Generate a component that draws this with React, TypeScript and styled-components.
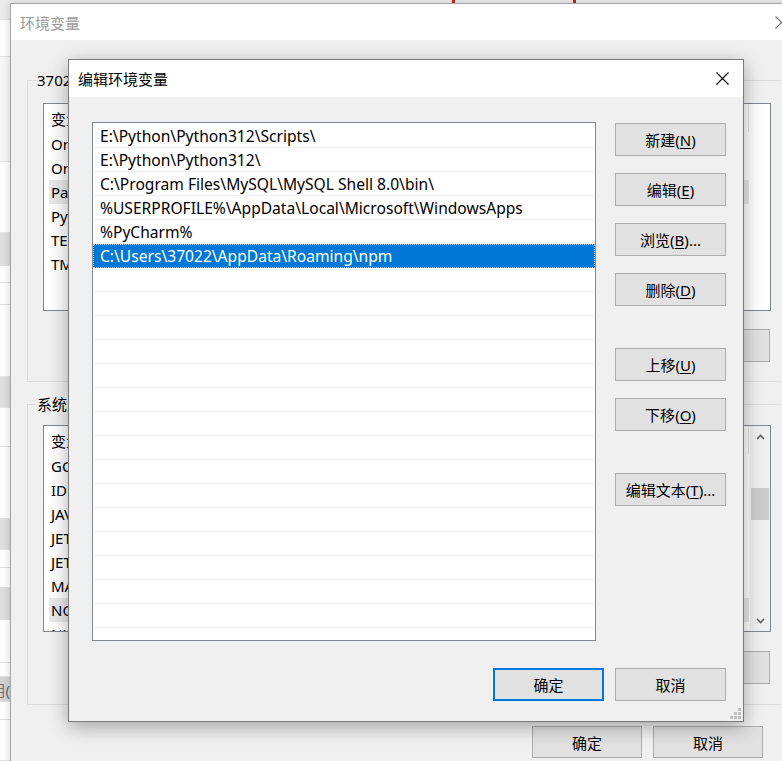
import styled, { createGlobalStyle } from "styled-components";

const GlobalStyle = createGlobalStyle`
  html, body {
    margin: 0;
    padding: 0;
  }
  body {
    font-family: "Noto Sans", "Noto Sans CJK SC", sans-serif;
    font-size: 15px;
    color: #000;
  }
`;

const userVars = ["OneDrive", "OneDriveConsumer", "Path", "PyCharm", "TEMP", "TMP"];
const systemVars = [
  "GOPATH",
  "IDEA_HOME",
  "JAVA_HOME",
  "JETBRAINSCLIENT_VM_OPTIONS",
  "JETBRAINS_GATEWAY_VM_OPTIONS",
  "MAVEN_HOME",
  "NODE_PATH",
  "NUMBER_OF_PROCESSORS",
  "OS",
];

const paths = [
  "E:\\Python\\Python312\\Scripts\\",
  "E:\\Python\\Python312\\",
  "C:\\Program Files\\MySQL\\MySQL Shell 8.0\\bin\\",
  "%USERPROFILE%\\AppData\\Local\\Microsoft\\WindowsApps",
  "%PyCharm%",
  "C:\\Users\\37022\\AppData\\Roaming\\npm",
];

const leftSegments = [
  { h: 20, bg: "#ececec" },
  { h: 37, bg: "#ffffff" },
  { h: 105, bg: "#f7f7f7" },
  { h: 71, bg: "#ffffff" },
  { h: 33, bg: "#dedede" },
  { h: 17, bg: "#ffffff" },
  { h: 22, bg: "#ffffff" },
  { h: 72, bg: "#ffffff" },
  { h: 31, bg: "#dedede" },
  { h: 39, bg: "#ffffff" },
  { h: 72, bg: "#ffffff" },
  { h: 31, bg: "#dedede" },
  { h: 18, bg: "#ffffff" },
  { h: 20, bg: "#ffffff" },
  { h: 32, bg: "#dedede" },
  { h: 43, bg: "#ffffff" },
  { h: 14, bg: "#ffffff" },
  { h: 25, bg: "#d4d4d4", text: "应用(" },
  { h: 18, bg: "#ffffff" },
  { h: 41, bg: "#ffffff" },
];

const Screen = styled.div`
  position: relative;
  width: 782px;
  height: 761px;
  overflow: hidden;
  background: #f3f3f3;
`;

const TopWindow = styled.div`
  position: absolute;
  left: 0;
  top: 0;
  width: 782px;
  height: 3px;
  display: flex;
  background: #eeeeee;
  padding-left: 452px;
  box-sizing: border-box;
`;

const RedMark = styled.div<{ $offset: number }>`
  width: 3px;
  margin-left: ${(p) => p.$offset}px;
  background: #c42b1c;
`;

const LeftWindow = styled.div`
  position: absolute;
  left: 0;
  top: 0;
  width: 10px;
  height: 761px;
  display: flex;
  flex-direction: column;
  overflow: hidden;
`;

const Segment = styled.div<{ $h: number; $bg: string }>`
  height: ${(p) => p.$h}px;
  flex-shrink: 0;
  box-sizing: border-box;
  background: ${(p) => p.$bg};
  border-bottom: 1px solid #e2e2e2;
  display: flex;
  align-items: center;
  justify-content: flex-end;
  overflow: hidden;
  white-space: nowrap;
  color: #6d6d6d;
`;

const BackWindow = styled.div`
  position: absolute;
  left: 10px;
  top: 3px;
  width: 794px;
  height: 790px;
  box-sizing: border-box;
  border: 1px solid #a6a6a6;
  background: #f0f0f0;
  display: flex;
  flex-direction: column;
  box-shadow: 0 0 8px rgba(0, 0, 0, 0.18);
`;

const TitleBar = styled.div<{ $inactive?: boolean }>`
  height: ${(p) => (p.$inactive ? 36 : 37)}px;
  flex-shrink: 0;
  background: #fff;
  display: flex;
  align-items: center;
  justify-content: space-between;
  padding-left: 9px;
  color: ${(p) => (p.$inactive ? "#9a9a9a" : "#000")};
`;

const CloseButton = styled.div<{ $w: number }>`
  width: ${(p) => p.$w}px;
  align-self: stretch;
  display: flex;
  align-items: center;
  justify-content: center;
`;

const BackBody = styled.div`
  padding: 30px 16px 0;
  display: flex;
  flex-direction: column;
`;

const Group = styled.fieldset<{ $gap?: number }>`
  margin: ${(p) => p.$gap ?? 0}px 0 0;
  padding: 0;
  min-width: 0;
  border: 1px solid #dcdcdc;
`;

const Legend = styled.legend`
  margin-left: 8px;
  padding: 0 1px;
  line-height: 20px;
`;

const GroupInner = styled.div<{ $top: number; $bottom: number }>`
  padding: ${(p) => p.$top}px 15px ${(p) => p.$bottom}px;
`;

const VarList = styled.div<{ $h: number }>`
  height: ${(p) => p.$h}px;
  box-sizing: border-box;
  border: 1px solid #828790;
  background: #fff;
  display: flex;
  overflow: hidden;
`;

const VarColumn = styled.div`
  flex: 1;
  min-width: 0;
  overflow: hidden;
`;

const HeaderRow = styled.div`
  width: 705px;
  height: 28px;
  box-sizing: border-box;
  border-right: 1px solid #e5e5e5;
  padding-left: 7px;
  display: flex;
  align-items: center;
`;

const VarRow = styled.div<{ $selected?: boolean }>`
  width: 700px;
  height: 24px;
  margin-left: 5px;
  padding-left: 2px;
  box-sizing: border-box;
  display: flex;
  align-items: center;
  white-space: nowrap;
  background: ${(p) => (p.$selected ? "#e9e9e9" : "transparent")};
`;

const ScrollBar = styled.div`
  width: 20px;
  flex-shrink: 0;
  border-left: 1px solid #fafafa;
  background: #f0f0f0;
  display: flex;
  flex-direction: column;
  align-items: center;
`;

const ScrollArrow = styled.div`
  height: 21px;
  display: flex;
  align-items: center;
  justify-content: center;
`;

const ScrollTrack = styled.div`
  flex: 1;
  display: flex;
  flex-direction: column;
  align-items: center;
`;

const ScrollThumb = styled.div`
  margin-top: 41px;
  width: 18px;
  height: 32px;
  background: #cdcdcd;
`;

const ButtonRow = styled.div<{ $top: number }>`
  margin-top: ${(p) => p.$top}px;
  padding-right: 1px;
  display: flex;
  justify-content: flex-end;
  gap: 12px;
`;

const WinButton = styled.button<{ $primary?: boolean; $top?: number; $h?: number; $w?: number }>`
  width: ${(p) => p.$w ?? 111}px;
  height: ${(p) => p.$h ?? 33}px;
  margin-top: ${(p) => p.$top ?? 0}px;
  flex-shrink: 0;
  box-sizing: border-box;
  padding: 0;
  background: #e1e1e1;
  border: ${(p) => (p.$primary ? "2px solid #0078d7" : "1px solid #adadad")};
  font: inherit;
  color: #000;
  display: flex;
  align-items: center;
  justify-content: center;
  white-space: nowrap;
`;

const Key = styled.span`
  text-decoration: underline;
  text-underline-offset: 2px;
`;

const BackFooter = styled.div`
  margin-top: 21px;
  padding-right: 24px;
  display: flex;
  justify-content: flex-end;
  gap: 11px;
`;

const Dialog = styled.div`
  position: absolute;
  left: 68px;
  top: 59px;
  width: 676px;
  height: 663px;
  box-sizing: border-box;
  border: 1px solid #7a7a7a;
  background: #f0f0f0;
  display: flex;
  flex-direction: column;
  box-shadow: 0 5px 18px rgba(0, 0, 0, 0.32);
`;

const DialogBody = styled.div`
  flex: 1;
  padding: 25px 17px 20px 23px;
  display: grid;
  grid-template-columns: 504px 111px;
  grid-template-rows: 519px 33px;
  column-gap: 19px;
  row-gap: 27px;
`;

const PathList = styled.div`
  box-sizing: border-box;
  border: 1px solid #828790;
  background: #fff;
  padding-top: 1px;
  overflow: hidden;
  font-size: 15.6px;
`;

const PathRow = styled.div<{ $selected?: boolean }>`
  height: 24px;
  box-sizing: border-box;
  margin: 0 ${(p) => (p.$selected ? 0 : 1)}px;
  padding-left: ${(p) => (p.$selected ? 7 : 6)}px;
  border-bottom: 1px solid ${(p) => (p.$selected ? "#0078d7" : "#f0f0f0")};
  display: flex;
  align-items: center;
  white-space: nowrap;
  background: ${(p) => (p.$selected ? "#0078d7" : "transparent")};
  color: ${(p) => (p.$selected ? "#fff" : "#000")};
  outline: ${(p) => (p.$selected ? "1px dotted #9ec9ee" : "none")};
  outline-offset: -1px;
`;

const ActionColumn = styled.div`
  display: flex;
  flex-direction: column;
`;

const DialogFooter = styled.div`
  grid-column: 1 / -1;
  display: flex;
  justify-content: flex-end;
  gap: 11px;
`;

const Grip = styled.svg`
  position: absolute;
  right: 2px;
  bottom: 2px;
`;

const CloseIcon = ({ color }: { color: string }) => (
  <svg width="13" height="13" viewBox="0 0 13 13">
    <path d="M0.5 0.5 L12.5 12.5 M12.5 0.5 L0.5 12.5" stroke={color} strokeWidth="1.1" fill="none" />
  </svg>
);

const Chevron = ({ down }: { down?: boolean }) => (
  <svg width="9" height="6" viewBox="0 0 9 6">
    <path
      d={down ? "M1 1 L4.5 4.5 L8 1" : "M1 5 L4.5 1.5 L8 5"}
      stroke="#606060"
      strokeWidth="1.6"
      fill="none"
    />
  </svg>
);

const Label = ({ text, k, tail = "" }: { text: string; k: string; tail?: string }) => (
  <>
    {text}(<Key>{k}</Key>){tail}
  </>
);

export default function App() {
  const emptyRows = Array.from({ length: 16 });
  return (
    <>
      <GlobalStyle />
      <Screen>
        <TopWindow>
          <RedMark $offset={0} />
          <RedMark $offset={118} />
        </TopWindow>
        <LeftWindow>
          {leftSegments.map((s, i) => (
            <Segment key={i} $h={s.h} $bg={s.bg}>
              {s.text}
            </Segment>
          ))}
        </LeftWindow>

        <BackWindow>
          <TitleBar $inactive>
            <span>环境变量</span>
            <CloseButton $w={44}>
              <CloseIcon color="#6e6e6e" />
            </CloseButton>
          </TitleBar>
          <BackBody>
            <Group>
              <Legend>37022 的用户变量(U)</Legend>
              <GroupInner $top={13} $bottom={19}>
                <VarList $h={208}>
                  <VarColumn>
                    <HeaderRow>变量</HeaderRow>
                    {userVars.map((v) => (
                      <VarRow key={v} $selected={v === "Path"}>
                        {v}
                      </VarRow>
                    ))}
                  </VarColumn>
                </VarList>
                <ButtonRow $top={18}>
                  <WinButton>
                    <Label text="新建" k="N" tail="..." />
                  </WinButton>
                  <WinButton>
                    <Label text="编辑" k="E" tail="..." />
                  </WinButton>
                  <WinButton>
                    <Label text="删除" k="D" />
                  </WinButton>
                </ButtonRow>
              </GroupInner>
            </Group>
            <Group $gap={12}>
              <Legend>系统变量(S)</Legend>
              <GroupInner $top={11} $bottom={20}>
                <VarList $h={207}>
                  <VarColumn>
                    <HeaderRow>变量</HeaderRow>
                    {systemVars.map((v) => (
                      <VarRow key={v} $selected={v === "NODE_PATH"}>
                        {v}
                      </VarRow>
                    ))}
                  </VarColumn>
                  <ScrollBar>
                    <ScrollArrow>
                      <Chevron />
                    </ScrollArrow>
                    <ScrollTrack>
                      <ScrollThumb />
                    </ScrollTrack>
                    <ScrollArrow>
                      <Chevron down />
                    </ScrollArrow>
                  </ScrollBar>
                </VarList>
                <ButtonRow $top={19}>
                  <WinButton>
                    <Label text="新建" k="W" tail="..." />
                  </WinButton>
                  <WinButton>
                    <Label text="编辑" k="I" tail="..." />
                  </WinButton>
                  <WinButton>
                    <Label text="删除" k="L" />
                  </WinButton>
                </ButtonRow>
              </GroupInner>
            </Group>
            <BackFooter>
              <WinButton $h={32} $w={110}>
                确定
              </WinButton>
              <WinButton $h={32} $w={110}>
                取消
              </WinButton>
            </BackFooter>
          </BackBody>
        </BackWindow>

        <Dialog>
          <TitleBar>
            <span>编辑环境变量</span>
            <CloseButton $w={42}>
              <CloseIcon color="#000" />
            </CloseButton>
          </TitleBar>
          <DialogBody>
            <PathList>
              {paths.map((p, i) => (
                <PathRow key={p} $selected={i === paths.length - 1}>
                  {p}
                </PathRow>
              ))}
              {emptyRows.map((_, i) => (
                <PathRow key={`empty-${i}`} />
              ))}
            </PathList>
            <ActionColumn>
              <WinButton $top={1}>
                <Label text="新建" k="N" />
              </WinButton>
              <WinButton $top={17}>
                <Label text="编辑" k="E" />
              </WinButton>
              <WinButton $top={17}>
                <Label text="浏览" k="B" tail="..." />
              </WinButton>
              <WinButton $top={17}>
                <Label text="删除" k="D" />
              </WinButton>
              <WinButton $top={42}>
                <Label text="上移" k="U" />
              </WinButton>
              <WinButton $top={17}>
                <Label text="下移" k="O" />
              </WinButton>
              <WinButton $top={42}>
                <Label text="编辑文本" k="T" tail="..." />
              </WinButton>
            </ActionColumn>
            <DialogFooter>
              <WinButton $primary>确定</WinButton>
              <WinButton>取消</WinButton>
            </DialogFooter>
          </DialogBody>
          <Grip width="11" height="11" viewBox="0 0 11 11">
            <rect x="8" y="0" width="3" height="3" fill="#c2c2c2" />
            <rect x="4" y="4" width="3" height="3" fill="#c2c2c2" />
            <rect x="8" y="4" width="3" height="3" fill="#c2c2c2" />
            <rect x="0" y="8" width="3" height="3" fill="#c2c2c2" />
            <rect x="4" y="8" width="3" height="3" fill="#c2c2c2" />
            <rect x="8" y="8" width="3" height="3" fill="#c2c2c2" />
          </Grip>
        </Dialog>
      </Screen>
    </>
  );
}
